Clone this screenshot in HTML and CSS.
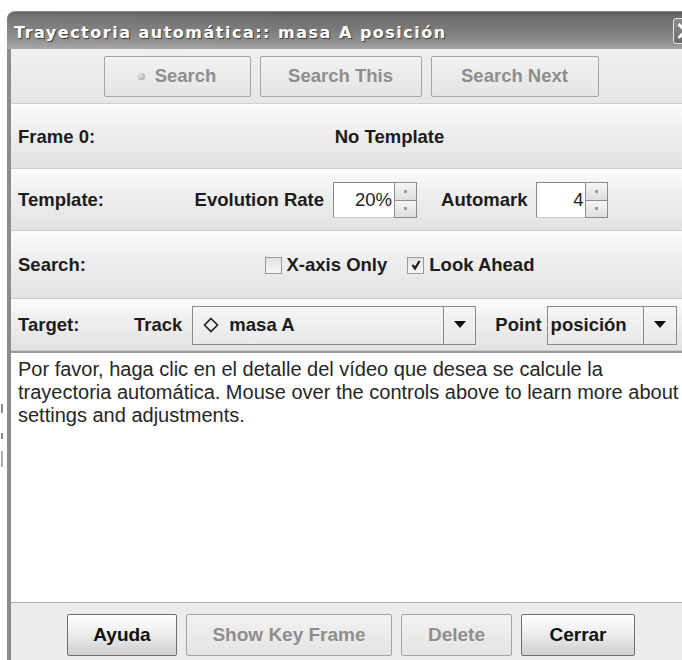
FILE: index.html
```html
<!DOCTYPE html>
<html lang="es">
<head>
<meta charset="utf-8">
<title>Trayectoria automática</title>
<link rel="stylesheet" href="styles.css">
</head>
<body>
<div class="desk">
<div class="gutter"><i class="tick t1"></i><i class="tick t2"></i><i class="tick t3"></i></div>
<div class="window">
  <div class="titlebar">
    <span class="title">Trayectoria automática:: masa A posición</span>
    <span class="close">
      <svg width="16" height="18" viewBox="0 0 16 18"><path d="M2.5 3 L13.5 15 M13.5 3 L2.5 15" stroke="#fff" stroke-width="2.8" stroke-linecap="square"/></svg>
    </span>
  </div>
  <div class="content">
    <div class="toolbar">
      <button class="btn btn-top disabled"><span class="dot"></span>Search</button>
      <button class="btn btn-top disabled">Search This</button>
      <button class="btn btn-top disabled">Search Next</button>
    </div>

    <div class="row row-frame">
      <span class="label">Frame 0:</span>
      <span class="group group-frame">No Template</span>
    </div>

    <div class="row row-template">
      <span class="label">Template:</span>
      <span class="group">
        <span class="caption">Evolution Rate</span>
        <span class="spinner">
          <span class="spin-field spin-rate">20%</span>
          <span class="spin-arrows"><span class="spin-btn"><i></i></span><span class="spin-btn"><i></i></span></span>
        </span>
        <span class="caption caption-auto">Automark</span>
        <span class="spinner">
          <span class="spin-field spin-auto">4</span>
          <span class="spin-arrows"><span class="spin-btn"><i></i></span><span class="spin-btn"><i></i></span></span>
        </span>
      </span>
    </div>

    <div class="row row-search">
      <span class="label">Search:</span>
      <span class="group group-search">
        <span class="check"><span class="box"></span>X-axis Only</span>
        <span class="check"><span class="box checked">
          <svg width="12" height="12" viewBox="0 0 12 12"><path d="M2.5 6 L5 9.5 L9.5 2" fill="none" stroke="#1a1a1a" stroke-width="2.2"/></svg>
        </span>Look Ahead</span>
      </span>
    </div>

    <div class="row row-target">
      <span class="label">Target:</span>
      <span class="caption caption-track">Track</span>
      <span class="combo combo-track">
        <span class="combo-value">
          <svg class="diamond" width="16" height="16" viewBox="0 0 16 16"><path d="M8 1.5 L14.5 8 L8 14.5 L1.5 8 Z" fill="none" stroke="#222" stroke-width="1.6"/></svg>
          masa A
        </span>
        <span class="combo-arrow"><svg width="12" height="8" viewBox="0 0 12 8"><path d="M0 0 H12 L6 7 Z" fill="#111"/></svg></span>
      </span>
      <span class="caption caption-point">Point</span>
      <span class="combo combo-point">
        <span class="combo-value">posición</span>
        <span class="combo-arrow"><svg width="12" height="8" viewBox="0 0 12 8"><path d="M0 0 H12 L6 7 Z" fill="#111"/></svg></span>
      </span>
    </div>

    <div class="notes">Por favor, haga clic en el detalle del vídeo que desea se calcule la trayectoria automática. Mouse over the controls above to learn more about settings and adjustments.</div>

    <div class="footer">
      <button class="btn btn-bottom btn-ayuda">Ayuda</button>
      <button class="btn btn-bottom btn-key disabled">Show Key Frame</button>
      <button class="btn btn-bottom btn-delete disabled">Delete</button>
      <button class="btn btn-bottom btn-cerrar">Cerrar</button>
    </div>
  </div>
</div>
</div>
</body>
</html>
```

FILE: styles.css
```css
html, body {
  margin: 0;
  background: #fff;
  overflow: hidden;
  height: 660px;
}

body {
  font-family: "Liberation Sans", Arial, sans-serif;
  color: #1c1c1c;
}

.desk {
  display: flex;
  padding-top: 11px;
}

/* strip of the desktop to the left of the window */
.gutter {
  width: 7px;
  flex: none;
  display: flex;
  flex-direction: column;
  align-items: flex-start;
}

.tick {
  width: 2px;
  margin-left: 1px;
  background: #8a8a8a;
}

.t1 { height: 9px; margin-top: 393px; }
.t2 { height: 6px; margin-top: 20px; }
.t3 { height: 16px; margin-top: 12px; background: #b0b0b0; }

.window {
  width: 682px;
  flex: none;
}

/* title bar */
.titlebar {
  height: 38px;
  display: flex;
  align-items: center;
  justify-content: space-between;
  padding: 3px 0 0 7px;
  box-sizing: border-box;
  border-top-left-radius: 8px;
  background:
    linear-gradient(to right, rgba(255,255,255,0.07), rgba(255,255,255,0) 45%),
    linear-gradient(to bottom, #5a5a5a 0%, #6c6c6c 12%, #7a7a7a 45%, #8e8e8e 80%, #a4a4a4 100%);
  border-top: 1px solid #8a8a8a;
}

.title {
  font: bold 16px "DejaVu Sans", Verdana, sans-serif;
  letter-spacing: 1.5px;
  color: #fff;
  text-shadow: 1px 1px 1px #3a3a3a;
}

.close {
  width: 21px;
  height: 24px;
  margin: -3px -7px 0 0;
  display: flex;
  align-items: center;
  justify-content: center;
  border: 1px solid #e6e6e6;
  border-radius: 3px;
  background: linear-gradient(#8c8c8c, #6a6a6a);
}

/* window body */
.content {
  border-left: 4px solid #8c8c8c;
  background: #ececec;
  height: 611px;
  display: flex;
  flex-direction: column;
}

.btn {
  font: bold 18.5px "Liberation Sans", Arial, sans-serif;
  display: inline-flex;
  align-items: center;
  justify-content: center;
  padding: 0;
  border-radius: 2px;
}

.btn.disabled {
  color: #8e8e8e;
  background: linear-gradient(#f2f2f2, #e4e4e4);
  border: 1px solid #a4a4a4;
}

.toolbar {
  height: 54px;
  display: flex;
  justify-content: center;
  align-items: center;
  gap: 9px;
  padding-left: 2px;
  background: linear-gradient(#f0f0f0, #e6e6e6);
  border-bottom: 1px solid #cfcfcf;
}

.btn-top {
  height: 41px;
}

.toolbar .btn:nth-child(1) { width: 147px; }
.toolbar .btn:nth-child(2) { width: 162px; }
.toolbar .btn:nth-child(3) { width: 168px; }

.dot {
  width: 7px;
  height: 7px;
  border-radius: 50%;
  background: radial-gradient(circle at 35% 35%, #e8e8e8, #9a9a9a);
  margin-right: 10px;
}

/* option rows */
.row {
  display: flex;
  align-items: center;
  padding-left: 7px;
  font-weight: bold;
  font-size: 18.5px;
  background: linear-gradient(#fbfbfb 0%, #f0f0f0 35%, #e2e2e2 100%);
  border-top: 1px solid #fdfdfd;
  border-bottom: 1px solid #cdcdcd;
}

.label {
  width: 96px;
  flex: none;
}

.group {
  flex: 1;
  display: flex;
  align-items: center;
  justify-content: center;
}

.row-frame { height: 63px; }
.group-frame { padding-right: 24px; }

.row-template { height: 60px; }
.row-search { height: 66px; }
.row-target { height: 50px; }

.caption-auto { margin-left: 24px; }

.spinner {
  display: inline-flex;
  margin-left: 9px;
  height: 36px;
}

.spin-field {
  background: #fff;
  border-top: 1px solid #8a8a8a;
  border-left: 1px solid #8a8a8a;
  border-bottom: 1px solid #c8c8c8;
  font-weight: normal;
  display: flex;
  align-items: center;
  justify-content: flex-end;
  padding-right: 2px;
}

.spin-rate { width: 58px; }
.spin-auto { width: 46px; }

.spin-arrows {
  width: 21px;
  display: flex;
  flex-direction: column;
  border: 1px solid #8c8c8c;
}

.spin-btn {
  flex: 1;
  display: flex;
  align-items: center;
  justify-content: center;
  background: linear-gradient(#f6f6f6, #dedede);
}

.spin-btn + .spin-btn {
  border-top: 1px solid #8c8c8c;
}

.spin-btn i {
  width: 3px;
  height: 3px;
  background: #9a9a9a;
}

/* checkboxes */
.group-search {
  padding-right: 4px;
}

.check {
  display: inline-flex;
  align-items: center;
}

.check + .check { margin-left: 20px; }

.box {
  width: 15px;
  height: 15px;
  border: 1px solid #9a9a9a;
  background: linear-gradient(#e2e2e2, #f6f6f6);
  margin-right: 5px;
  display: flex;
  align-items: center;
  justify-content: center;
}

/* target row */
.caption-track { margin-left: 20px; }

.combo {
  display: flex;
  height: 37px;
  border: 1px solid #8a8a8a;
  background: linear-gradient(#f6f6f6, #e8e8e8);
}

.combo-track {
  width: 282px;
  margin-left: 10px;
}

.combo-point {
  width: 128px;
  margin-left: 5px;
}

.caption-point { margin-left: 19px; }

.combo-value {
  flex: 1;
  display: flex;
  align-items: center;
  padding-left: 3px;
}

.diamond {
  margin: 0 10px 0 7px;
}

.combo-arrow {
  width: 31px;
  border-left: 1px solid #8a8a8a;
  display: flex;
  align-items: center;
  justify-content: center;
}

.combo-point .combo-arrow { width: 32px; }

/* message area */
.notes {
  height: 244px;
  background: #fff;
  border-top: 2px solid #9c9c9c;
  border-bottom: 1px solid #b4b4b4;
  padding: 5px 8px 0 7px;
  font-size: 20px;
  line-height: 23px;
  color: #262626;
}

.footer {
  flex: 1;
  display: flex;
  justify-content: center;
  align-items: flex-start;
  gap: 9px;
  padding-top: 11px;
  padding-left: 2px;
  background: #ececec;
}

.btn-bottom {
  height: 42px;
  font-size: 19px;
}

.btn-ayuda, .btn-cerrar {
  color: #111;
  border: 1px solid #6e6e6e;
  background: linear-gradient(#ffffff 0%, #f0f0f0 40%, #cfcfcf 100%);
}

.btn-ayuda { width: 110px; }
.btn-key { width: 206px; }
.btn-delete { width: 111px; }
.btn-cerrar { width: 114px; }
```
